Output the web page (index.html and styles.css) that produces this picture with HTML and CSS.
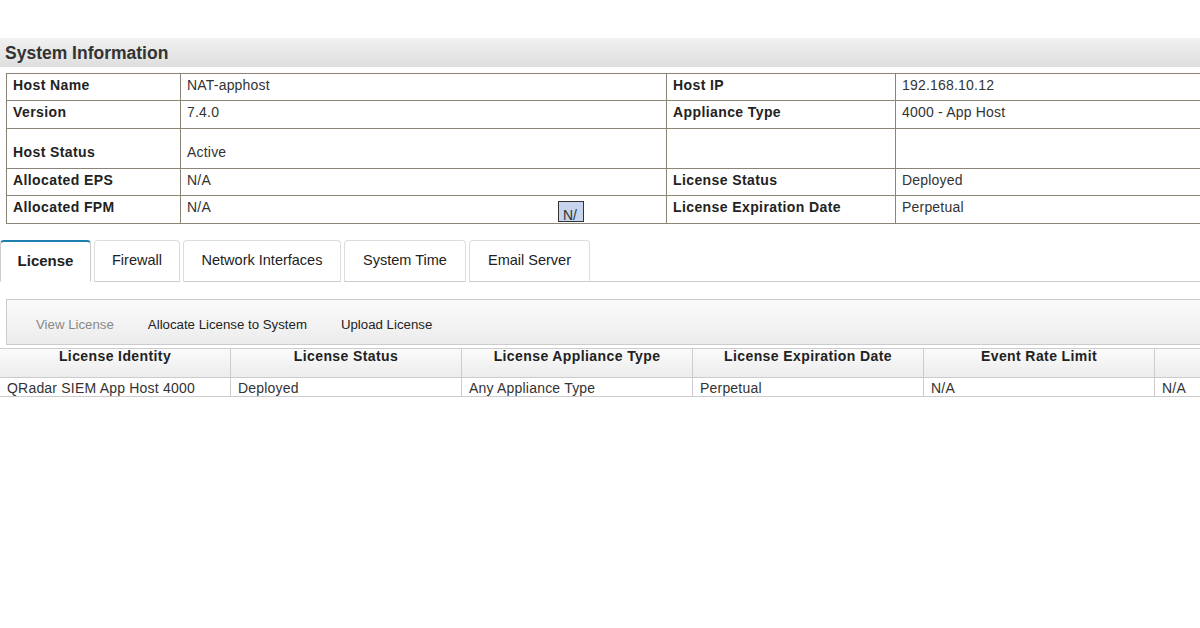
FILE: index.html
```html
<!DOCTYPE html>
<html>
<head>
<meta charset="utf-8">
<link rel="stylesheet" href="styles.css">
</head>
<body>
<div class="page">
  <h2 class="section-title">System Information</h2>
  <table class="info">
    <colgroup><col class="c1"><col class="c2"><col class="c3"><col class="c4"></colgroup>
    <tr class="r1"><th>Host Name</th><td>NAT-apphost</td><th>Host IP</th><td>192.168.10.12</td></tr>
    <tr class="r2"><th>Version</th><td>7.4.0</td><th>Appliance Type</th><td>4000 - App Host</td></tr>
    <tr class="r3"><th>Host Status</th><td>Active</td><th></th><td></td></tr>
    <tr class="r4"><th>Allocated EPS</th><td>N/A</td><th>License Status</th><td>Deployed</td></tr>
    <tr class="r5"><th>Allocated FPM</th><td class="rel">N/A<span class="tip">N/</span></td><th>License Expiration Date</th><td>Perpetual</td></tr>
  </table>

  <div class="tabs">
    <div class="tab active">License</div>
    <div class="tab">Firewall</div>
    <div class="tab">Network Interfaces</div>
    <div class="tab">System Time</div>
    <div class="tab">Email Server</div>
    <div class="tab-fill"></div>
  </div>

  <div class="toolbar">
    <span class="tool disabled">View License</span>
    <span class="tool">Allocate License to System</span>
    <span class="tool">Upload License</span>
  </div>

  <div class="grid">
    <div class="grid-row head">
      <div class="gc">License Identity</div>
      <div class="gc">License Status</div>
      <div class="gc">License Appliance Type</div>
      <div class="gc">License Expiration Date</div>
      <div class="gc">Event Rate Limit</div>
      <div class="gc"></div>
    </div>
    <div class="grid-row data">
      <div class="gc">QRadar SIEM App Host 4000</div>
      <div class="gc">Deployed</div>
      <div class="gc">Any Appliance Type</div>
      <div class="gc">Perpetual</div>
      <div class="gc">N/A</div>
      <div class="gc">N/A</div>
    </div>
  </div>
</div>
</body>
</html>
```

FILE: styles.css
```css
html, body {
  margin: 0;
  padding: 0;
  background: #fff;
  overflow: hidden;
}
body {
  font-family: "Liberation Sans", Arial, sans-serif;
  color: #333;
  width: 1200px;
  height: 628px;
}
.page {
  padding-top: 38px;
  width: 1200px;
  overflow: hidden;
}
.section-title {
  margin: 0;
  height: 29px;
  line-height: 30px;
  padding-left: 5px;
  font-size: 17.5px;
  font-weight: bold;
  color: #333;
  background: linear-gradient(#f1f1f1, #dedede);
}
.info {
  margin: 6px 0 0 6px;
  border-collapse: collapse;
  table-layout: fixed;
  width: 1220px;
  font-size: 14px;
}
.info col.c1 { width: 174px; }
.info col.c2 { width: 486px; }
.info col.c3 { width: 229px; }
.info col.c4 { width: 331px; }
.info th, .info td {
  border: 1px solid #8c8577;
  text-align: left;
  vertical-align: top;
  padding: 3px 6px 0 6px;
  white-space: nowrap;
  line-height: 17px;
}
.info th {
  font-weight: bold;
  color: #222;
  letter-spacing: 0.4px;
}
.info td {
  color: #333;
  letter-spacing: 0.2px;
}
.info tr.r1 th, .info tr.r1 td { height: 23px; }
.info tr.r2 th, .info tr.r2 td { height: 24px; }
.info tr.r3 th, .info tr.r3 td { height: 24px; padding-top: 15px; }
.info tr.r4 th, .info tr.r4 td { height: 23px; }
.info tr.r5 th, .info tr.r5 td { height: 24px; }
.rel { position: relative; }
.tip {
  position: absolute;
  left: 377px;
  top: 5px;
  background: #c6d4ee;
  border: 1px solid #333;
  font-size: 14px;
  line-height: 27px;
  padding-left: 4px;
  box-sizing: border-box;
  width: 26px;
  height: 21px;
  overflow: hidden;
  color: #333;
  letter-spacing: 0;
}
.tabs {
  display: flex;
  align-items: flex-end;
  margin-top: 16px;
  height: 42px;
}
.tab {
  box-sizing: border-box;
  height: 42px;
  margin-right: 3px;
  font-size: 14.5px;
  line-height: 38px;
  color: #222;
  background: #fff;
  border: 1px solid #ddd;
  border-bottom: 1px solid #ccc;
  border-radius: 4px 4px 0 0;
  text-align: center;
}
.tab.active {
  width: 91px;
  font-size: 15px;
  font-weight: bold;
  border: 1px solid #ccc;
  border-top: 2px solid #1f7fb0;
  border-bottom: 1px solid #fff;
  line-height: 37px;
}
.tab:nth-child(2) { width: 86px; }
.tab:nth-child(3) { width: 158px; }
.tab:nth-child(4) { width: 122px; }
.tab:nth-child(5) { width: 121px; margin-right: 0; }
.tab-fill {
  flex: 1;
  border-bottom: 1px solid #ccc;
  height: 0;
}
.toolbar {
  margin: 17px 0 0 6px;
  box-sizing: border-box;
  height: 46px;
  width: 1210px;
  border: 1px solid #ccc;
  background: linear-gradient(#fafafa, #ececec);
  display: flex;
  align-items: center;
  padding: 5px 0 0 29px;
  font-size: 13.25px;
  color: #222;
}
.tool { margin-right: 34px; }
.tool.disabled { color: #888; }
.grid {
  margin-top: 3px;
  font-size: 14px;
}
.grid-row {
  display: flex;
  width: 1240px;
}
.gc {
  box-sizing: border-box;
  width: 231px;
  flex: none;
  border-right: 1px solid #ccc;
  white-space: nowrap;
}
.grid-row.head {
  height: 30px;
  background: linear-gradient(#fbfbfb, #ececec);
  border-top: 1px solid #ccc;
  border-bottom: 1px solid #ccc;
  box-sizing: border-box;
}
.grid-row.head .gc {
  text-align: center;
  font-weight: bold;
  color: #222;
  padding-top: 0;
  line-height: 15px;
  letter-spacing: 0.4px;
}
.grid-row.data {
  height: 19px;
  box-sizing: border-box;
  border-bottom: 1px solid #ccc;
}
.grid-row.data .gc {
  padding-left: 7px;
  line-height: 20px;
  color: #333;
  letter-spacing: 0.2px;
}
```
